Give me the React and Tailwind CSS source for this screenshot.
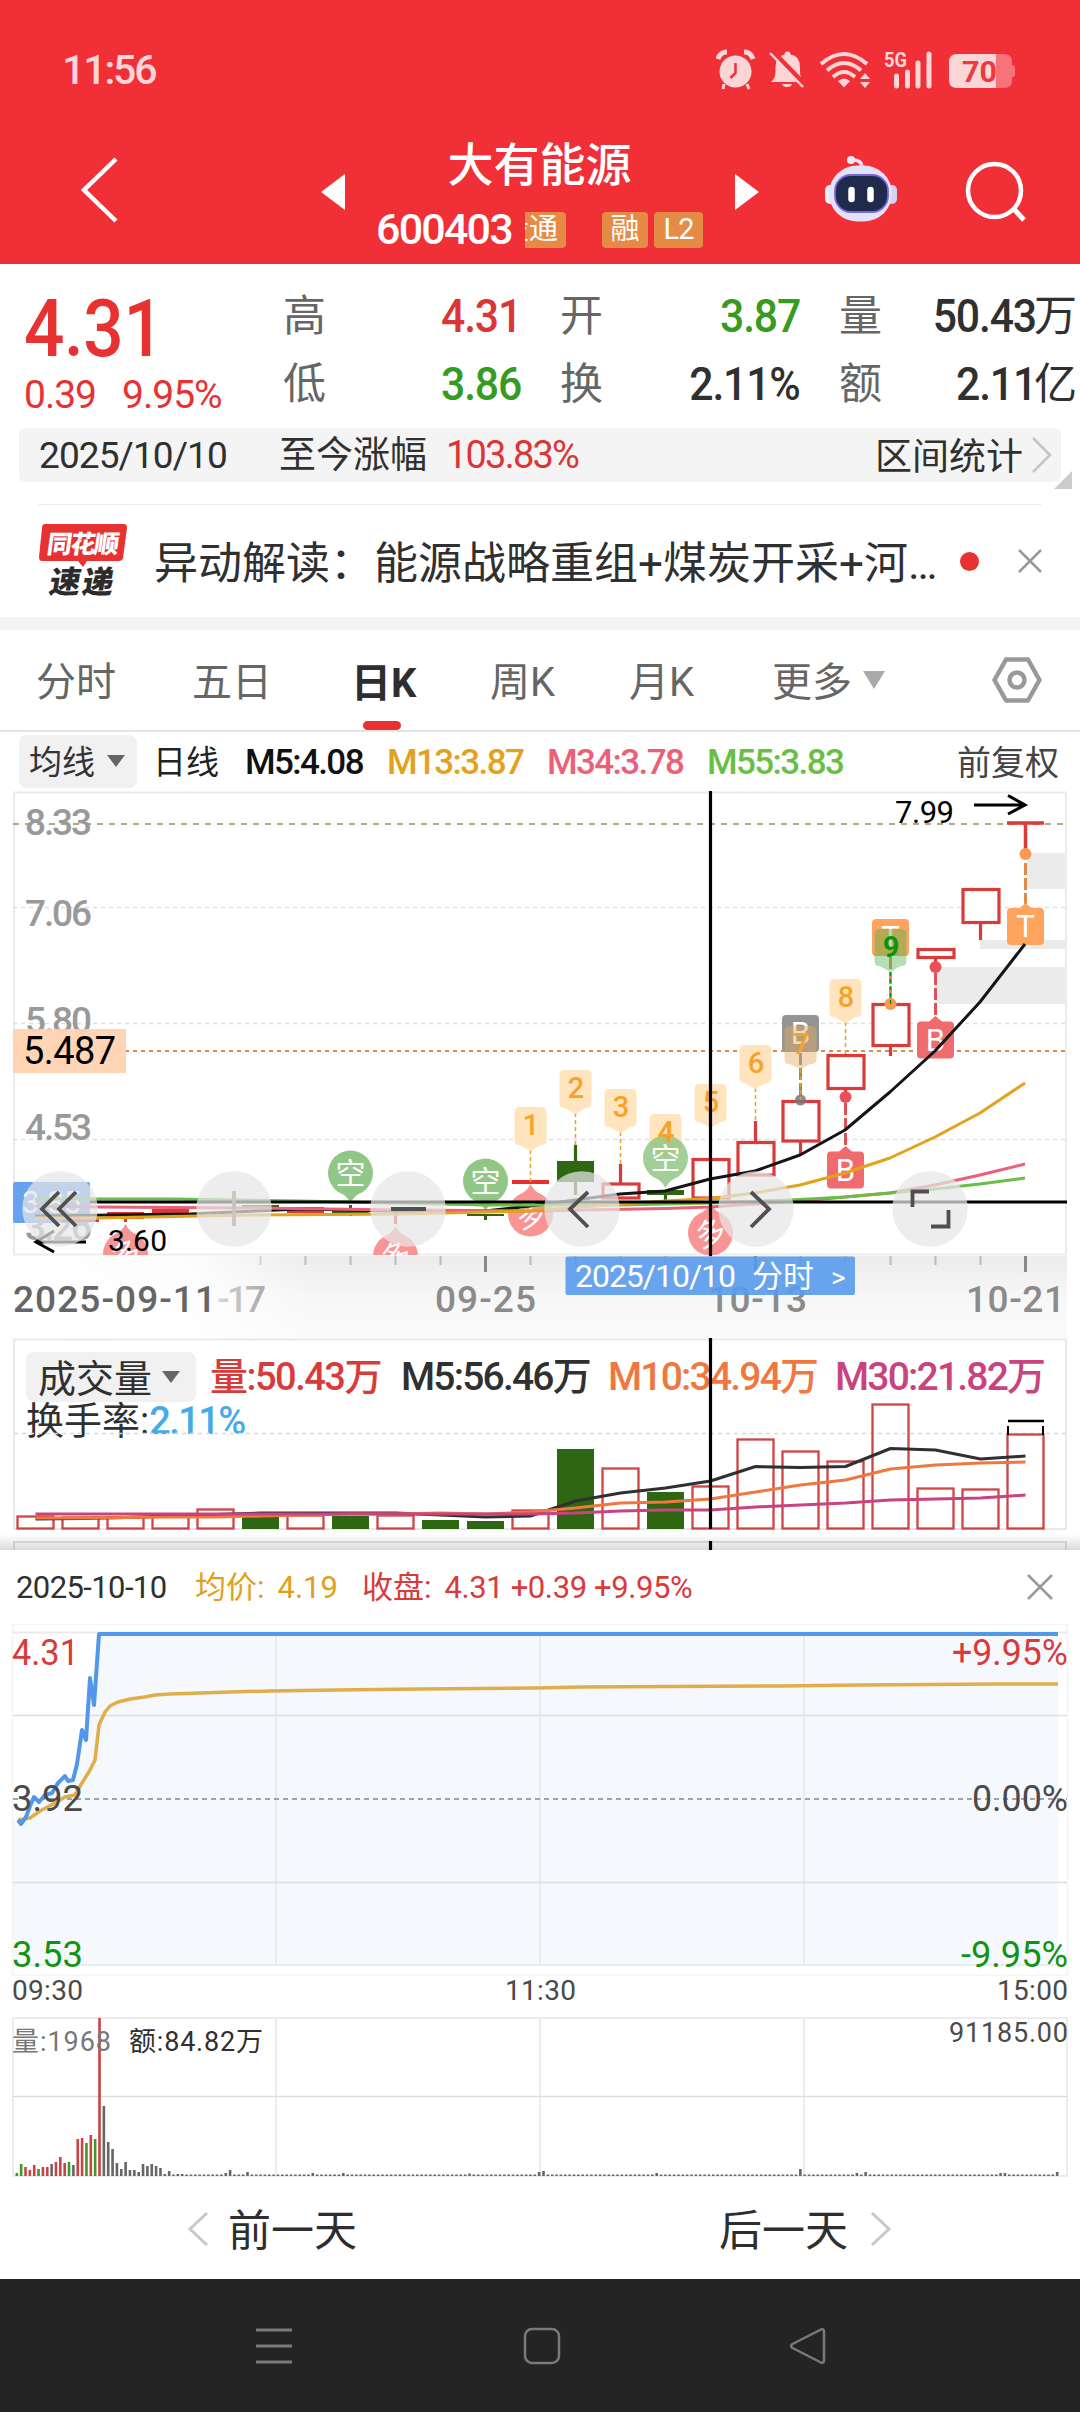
import React from 'react';

const cx = (i) => 35.5 + i * 45;
const toPoints = (list) => list.map(([x, y]) => `${x},${y}`).join(' ');

const RED = '#d93a3a';
const GREEN = '#2e6612';

const quotes = [
  { label: '高', value: '4.31', tone: 'text-[#dc3535]' },
  { label: '开', value: '3.87', tone: 'text-[#379b22]' },
  { label: '量', value: '50.43', unit: '万', tone: 'text-[#303030]' },
  { label: '低', value: '3.86', tone: 'text-[#379b22]' },
  { label: '换', value: '2.11%', tone: 'text-[#303030]' },
  { label: '额', value: '2.11', unit: '亿', tone: 'text-[#303030]' },
];

const candles = [
  { i: 12, fill: true, top: 1161, bottom: 1182, high: 1145, low: 1195 },
  { i: 13, top: 1184, bottom: 1198, high: 1164 },
  { i: 14, fill: true, top: 1190, bottom: 1195, low: 1200 },
  { i: 15, top: 1159.5, bottom: 1198 },
  { i: 16, top: 1142.5, bottom: 1175, high: 1121 },
  { i: 17, top: 1101.5, bottom: 1141, low: 1154 },
  { i: 18, top: 1055.5, bottom: 1088.5, low: 1100 },
  { i: 19, top: 1004.5, bottom: 1045.5, low: 1056 },
  { i: 20, top: 949.5, bottom: 957.5, low: 967 },
  { i: 21, top: 889.5, bottom: 922.5, low: 940 },
];

const flatCandles = [
  { i: 1, y: 1218, h: 4, color: RED },
  { i: 2, y: 1212, h: 7, color: RED },
  { i: 3, y: 1209, h: 4, color: RED },
  { i: 5, y: 1205, h: 3, color: GREEN },
  { i: 6, y: 1207, h: 6, color: RED },
  { i: 7, y: 1210, h: 4, color: GREEN },
  { i: 10, y: 1214, h: 2, color: GREEN },
  { i: 11, y: 1180, h: 4, color: '#e63030' },
];

const steps = [
  { i: 11, n: 1, y: 1107, end: 1182 },
  { i: 12, n: 2, y: 1070, end: 1145 },
  { i: 13, n: 3, y: 1089, end: 1164 },
  { i: 15, n: 5, y: 1084, end: 1127 },
  { i: 16, n: 6, y: 1045, end: 1121 },
  { i: 18, n: 8, y: 979, end: 1055 },
];

const ma5 = [[35, 1216], [190, 1214], [300, 1209], [395, 1211], [440, 1212], [485, 1211], [530, 1206], [575, 1200], [620, 1194], [665, 1191], [710, 1179], [755, 1171], [800, 1155], [845, 1130], [890, 1092], [935, 1051], [980, 1002], [1025, 944]];
const ma13 = [[35, 1218], [97, 1218], [250, 1215], [400, 1214], [530, 1211], [620, 1204], [665, 1201], [710, 1198.5], [755, 1193], [800, 1185], [845, 1173], [890, 1158], [935, 1137], [980, 1113], [1025, 1083]];
const ma34 = [[35, 1206], [97, 1207], [250, 1208], [400, 1210], [530, 1211], [665, 1208.5], [710, 1207], [755, 1204], [800, 1201], [845, 1197], [890, 1193], [935, 1185], [980, 1175], [1025, 1164]];
const ma55 = [[35, 1199], [170, 1199], [300, 1201], [485, 1205], [620, 1205], [710, 1203], [800, 1199.5], [845, 1197], [890, 1193], [935, 1189], [980, 1184], [1025, 1178]];

const volumeTops = [1517, 1518, 1518, 1517, 1510, 1516, 1516, 1516, 1516, 1520, 1521, 1511, 1449, 1469, 1492, 1487, 1440, 1452, 1462, 1405, 1489, 1490, 1435];
const volumeDown = [5, 7, 9, 10, 12, 14];
const vol5 = [1519, 1518.5, 1517.5, 1516, 1514.5, 1513, 1513, 1513, 1513, 1515, 1517, 1516, 1501, 1493, 1488, 1481, 1466.5, 1467.5, 1466.5, 1448.5, 1450, 1459, 1456];
const vol10 = [1518, 1518, 1517.5, 1517, 1517, 1516, 1515, 1514, 1514, 1513, 1514, 1512, 1508, 1503, 1502, 1499, 1492, 1485, 1480, 1469, 1465, 1463, 1462];
const vol30 = [1514, 1514, 1514, 1514, 1514, 1514, 1514, 1514, 1514, 1514, 1514, 1514, 1513, 1511, 1510, 1510, 1507, 1505, 1503, 1500, 1499, 1498, 1495];

const priceLine = [[18, 1820], [21, 1824], [26, 1817], [30, 1806], [34, 1797], [39, 1802], [45, 1795], [52, 1793], [58, 1783], [65, 1776], [68, 1781], [73, 1780], [77, 1764], [82, 1730], [86, 1740], [90, 1678], [94, 1705], [99, 1634], [1058, 1634]];
const avgLine = [[18, 1820], [30, 1818], [40, 1811], [55, 1803], [65, 1797], [75, 1795], [82, 1783], [90, 1770], [95, 1760], [99, 1725], [105, 1712], [110, 1706], [118, 1702], [130, 1699], [145, 1697], [155, 1695], [170, 1694], [230, 1692], [270, 1691], [335, 1690], [420, 1689], [535, 1688], [580, 1687], [780, 1686], [860, 1685], [1000, 1684], [1058, 1684]];

const minuteColors = 'ggrrrgrrkrrrgkrrgrgr';
const minuteHead = [3, 12, 9, 6, 11, 7, 9, 9, 12, 14, 19, 13, 14, 11, 37, 38, 33, 41, 37, 158, 70, 34, 27, 13, 7, 14, 6, 6, 4, 12, 10, 12, 10, 8, 2, 5, 1.5, 2, 2];
const minuteSpikes = { 48: 3, 49: 6, 53: 4, 68: 3, 75: 3, 104: 2.5, 120: 4, 121: 5, 147: 3, 180: 7, 193: 3, 195: 4, 226: 3, 227: 3, 239: 4 };
const minuteBars = Array.from({ length: 240 }, (_, n) => minuteHead[n] ?? minuteSpikes[n] ?? 1.5);
const minuteFill = { g: '#3c9a2c', r: '#cc4242', k: '#666666' };

function StatusIcons() {
  return (
    <svg className="h-[44px] w-[302px]" viewBox="716 48 302 44" fill="none">
      <g fill="#fcd5d7">
        <circle cx="735.5" cy="71.5" r="16" />
        <path d="M718 59q2-7 9-7M753 59q-2-7-9-7" fill="none" stroke="#fcd5d7" strokeWidth="5" />
        <path d="M724 84l-1 5M747 84l2 5" stroke="#fcd5d7" strokeWidth="3" />
        <path d="M735.500 63v10l-5 5" fill="none" stroke="#f12f37" strokeWidth="2.500" />
        <path d="M771 82h33q-4-4-4-10v-5q0-11-9.500-12.500a3 3 0 0 0-6 0q-9 2-9 12.500v5q0 6-4.500 10zM782 84h10q-1 3-5 3t-5-3z" />
      </g>
      <path d="M773.500 53l33 34" stroke="#f12f37" strokeWidth="6" />
      <path d="M770 53l33 34" stroke="#fcd5d7" strokeWidth="2.500" />
      <g stroke="#fcd5d7" strokeWidth="3.800">
        <path d="M821 64q23-20 46 0M827 70.500q17-15 34 0M833 77q11-10 22 0" />
      </g>
      <path d="M838 81q6-5 12 0l-6 6.500zM860 79l5-6 5 6zM860 82l5 6 5-6z" fill="#fcd5d7" />
      <text x="884" y="67" fontSize="21" fontWeight="700" fill="#fcd5d7" textLength="23" lengthAdjust="spacingAndGlyphs">5G</text>
      <path d="M896.500 76v10M907.500 72v14M918 63v23M929 54v32" stroke="#fcd5d7" strokeWidth="5" strokeLinecap="round" />
      <path d="M996 54h8q8 0 8 8v3q3 0 3 3v6q0 3-3 3v3q0 8-8 8h-8z" fill="#f77379" />
      <path d="M996 54h-39q-8 0-8 8v18q0 8 8 8h39z" fill="#fcd5d7" />
      <text x="962" y="82" fontSize="29" fontWeight="700" fill="#ec3a41" textLength="35" lengthAdjust="spacingAndGlyphs">70</text>
    </svg>
  );
}

function Robot() {
  return (
    <svg className="h-[68px] w-[74px] shrink-0" viewBox="824 155 74 68" fill="none">
      <path d="M851 160q11-1 11 8" stroke="#e6e1f6" strokeWidth="3.500" />
      <circle cx="851" cy="160" r="4" fill="#ece8fa" />
      <rect x="825" y="185" width="10" height="19" rx="5" fill="#efeffc" />
      <rect x="887" y="185" width="10" height="19" rx="5" fill="#d3d2f2" />
      <rect x="829" y="165.500" width="63" height="56" rx="28" fill="#e4e2f7" />
      <rect x="835" y="175" width="53" height="37" rx="16" fill="#1f2a4d" stroke="#7765dd" strokeWidth="1.800" />
      <path d="M851.500 190v9M870.500 190v9" stroke="white" strokeWidth="6.500" strokeLinecap="round" />
    </svg>
  );
}

function Header() {
  return (
    <header className="h-[264px] bg-[#f12f37] text-white">
      <div className="flex h-[120px] items-center justify-between pt-5 pr-[62px] pl-[62px]">
        <span className="text-[41px] leading-none font-medium tracking-[-2.1px] text-[#fcd5d7]">11:56</span>
        <StatusIcons />
      </div>
      <div className="flex h-[144px] items-center pl-[79px]">
        <svg className="mb-1 h-[66px] w-[40px] shrink-0" viewBox="79 157 40 66" fill="none" stroke="white" strokeWidth="4.500">
          <path d="M116 159L84 190l32 31" />
        </svg>
        <svg className="ml-[202px] h-[38px] w-[24px] shrink-0" viewBox="0 0 24 38"><path d="M24 1v36L0 19z" fill="white" /></svg>
        <div className="ml-[31px] flex w-[327px] shrink-0 flex-col items-center pt-[13px]">
          <div className="flex h-[62px] items-center text-[46px] leading-none font-medium">大有能源</div>
          <div className="flex h-[68px] w-full items-center">
            <span className="w-[149px] text-[43px] leading-none font-medium tracking-[-1.8px]">600403</span>
            <span className="flex h-[36px] w-[41px] justify-end overflow-hidden rounded-r bg-[#e58b45] pr-2 text-[29px] leading-[35px] whitespace-nowrap">股通</span>
            <span className="ml-[36px] flex h-[36px] w-[46px] items-center justify-center rounded bg-[#e58b45] text-[29px] leading-none">融</span>
            <span className="ml-[6px] flex h-[36px] w-[49px] items-center justify-center rounded bg-[#e58b45] text-[29px] leading-none tracking-[-1px]">L2</span>
          </div>
        </div>
        <svg className="ml-8 h-[38px] w-[24px] shrink-0" viewBox="0 0 24 38"><path d="M0 1v36l24-18z" fill="white" /></svg>
        <div className="ml-[65px] pb-[6px]"><Robot /></div>
        <svg className="mb-0.5 ml-[67px] h-[62px] w-[62px] shrink-0" viewBox="965 160 62 62" fill="none" stroke="white" strokeWidth="4.500">
          <circle cx="994.5" cy="190.5" r="26.500" />
          <path d="M1013 208l11 12" strokeWidth="5" />
        </svg>
      </div>
    </header>
  );
}

function Quote() {
  return (
    <section>
      <div className="flex h-[164px]">
        <div className="w-[283px] shrink-0 pl-[24px] text-[#e83131]">
          <div className="h-[101px] origin-left scale-x-[0.89] pt-[25px] text-[80px] leading-none font-medium tracking-[-0.5px]">4.31</div>
          <div className="flex gap-[26px] text-[39px] leading-[60px] tracking-[-1px]">
            <span>0.39</span>
            <span>9.95%</span>
          </div>
        </div>
        <div className="grid grid-cols-[238px_240px_238px] grid-rows-[68px_68px] gap-x-[39px] pt-[18px]">
          {quotes.map((q) => (
            <div key={q.label} className="flex items-center justify-between whitespace-nowrap">
              <span className="text-[43px] leading-none text-[#666]">{q.label}</span>
              <span className={`flex items-center text-[46px] leading-none font-medium ${q.tone}`}>
                <span className="origin-right scale-x-[0.93] tracking-[-1.3px]">{q.value}</span>
                {q.unit ? <span className="-ml-[2px] text-[43px] font-normal">{q.unit}</span> : null}
              </span>
            </div>
          ))}
        </div>
      </div>
      <div className="mx-[19px] flex h-[54px] items-center rounded-md bg-[#f4f4f4] pr-2 pl-[20px] text-[37px] leading-none text-[#303030]">
        <span className="w-[240px] tracking-[-0.9px]">2025/10/10</span>
        <span className="w-[167px]">至今涨幅</span>
        <span className="text-[38px] tracking-[-1.8px] text-[#dc3535]">103.83%</span>
        <span className="ml-auto pt-[4px]">区间统计</span>
        <svg className="ml-[8px] h-[36px] w-[22px]" viewBox="0 0 22 36" fill="none" stroke="#c4c4c4" strokeWidth="2.500"><path d="M2 1l17 17L2 35" /></svg>
      </div>
      <div className="flex h-[22px] items-start justify-end pr-[8px]">
        <svg className="-mt-[11px] h-[18px] w-[18px]" viewBox="0 0 18 18"><path d="M18 0v18H0z" fill="#ccc" /></svg>
      </div>
      <div className="mx-[38px] h-px bg-[#ededed]" />
      <div className="flex h-[112px] items-center pl-[38px]">
        <svg className="h-[80px] w-[90px] shrink-0" viewBox="38 521 90 80">
          <path d="M45 524h79q3 0 3 4l-4 30q-1 3-4 3H87l-4 6-5-6H42q-3 0-3-4l3-29q0-4 3-4z" fill="#e83131" />
          <text x="0" y="0" transform="translate(46 553) skewX(-8)" fontSize="25" fontWeight="900" fill="white" textLength="72">同花顺</text>
          <text x="0" y="0" transform="translate(48 593) skewX(-10)" fontSize="31" fontWeight="900" fill="#2c2c2c" textLength="64">速递</text>
        </svg>
        <p className="ml-[26px] w-[784px] truncate pt-[5px] text-[44px] leading-[60px] text-[#303030]">异动解读：能源战略重组+煤炭开采+河南国资</p>
        <span className="ml-[22px] h-[19px] w-[19px] shrink-0 rounded-full bg-[#e83131]" />
        <svg className="ml-[39px] h-[24px] w-[24px] shrink-0" viewBox="0 0 24 24" stroke="#999" strokeWidth="2.500"><path d="M1 1l22 22M23 1L1 23" /></svg>
      </div>
    </section>
  );
}

function Tabs() {
  return (
    <nav className="flex h-[102px] items-center border-b-2 border-[#e4e4e4] pl-[36px] text-[40px] leading-none whitespace-nowrap text-[#666]">
      <span className="w-[156px] pt-[5px]">分时</span>
      <span className="w-[159px] pt-[5px]">五日</span>
      <span className="flex h-full w-[139px] flex-col justify-between font-bold text-[#2e2e2e]">
        <span className="pt-[34px]">日K</span>
        <i className="ml-[12px] h-[9px] w-[38px] rounded-full bg-[#e83131]" />
      </span>
      <span className="w-[139px] pt-[5px]">周K</span>
      <span className="w-[143px] pt-[5px]">月K</span>
      <span className="pt-[5px]">更多</span>
      <svg className="ml-[11px] h-[18px] w-[22px]" viewBox="0 0 22 18"><path d="M0 0h22L11 18z" fill="#aaa" /></svg>
      <svg className="ml-[107px] h-[46px] w-[50px]" viewBox="0 0 50 46" fill="none" stroke="#999" strokeWidth="4.500" strokeLinejoin="round">
        <path d="M14 2.500h22L47.500 23 36 43.500H14L2.500 23z" />
        <circle cx="25" cy="23" r="7.500" />
      </svg>
    </nav>
  );
}

function AverageRow() {
  return (
    <div className="flex h-[58px] items-center pl-[19px] text-[35px] leading-[50px] font-medium tracking-[-1.6px] whitespace-nowrap">
      <span className="flex h-[53px] w-[118px] items-center rounded-lg bg-[#f1f1f1] pl-[10px] text-[33px] font-normal tracking-normal text-[#333]">
        <span className="pt-[3px]">均线</span>
        <svg className="ml-[12px] h-[12px] w-[18px]" viewBox="0 0 18 12"><path d="M0 0h18L9 12z" fill="#666" /></svg>
      </span>
      <span className="ml-[16px] w-[92px] pt-[4px] text-[33px] font-normal tracking-normal text-[#222]">日线</span>
      <span className="w-[142px] pt-[3px] text-[#111]">M5:4.08</span>
      <span className="w-[160px] pt-[3px] text-[#e3a11c]">M13:3.87</span>
      <span className="w-[160px] pt-[3px] text-[#ec6076]">M34:3.78</span>
      <span className="w-[250px] pt-[3px] text-[#69be46]">M55:3.83</span>
      <span className="pt-[4px] text-[34px] font-normal tracking-normal text-[#444]">前复权</span>
    </div>
  );
}

function StepTag({ i, n, y, end }) {
  const x = cx(i);
  return (
    <g>
      <path d={`M${x} ${y + 43}V${end}`} stroke="#dfa52e" strokeWidth="1.500" strokeDasharray="4 3" />
      <path d={`M${x - 11} ${y + 38}h-1q-4 0-4-5V${y + 5}q0-5 5-5h22q5 0 5 5v28q0 5-5 5h-1L${x} ${y + 44}z`} fill="#ffe3ba" fillOpacity="0.950" />
      <text x={x + 0.5} y={y + 28} textAnchor="middle" fontSize="29" fontWeight="500" fill="#f5a32a">{n}</text>
    </g>
  );
}

function Badge({ i, y, letter, color }) {
  return (
    <g>
      <rect x={cx(i) - 18.5} y={y} width="37" height="37" rx="4" fill={color} />
      <text x={cx(i)} y={y + 29} textAnchor="middle" fontSize="31" fill="white">{letter}</text>
    </g>
  );
}

function SignalPin({ i, y, text, up }) {
  const x = cx(i);
  const color = up ? '#f98f8f' : '#8cc580';
  const path = up
    ? `M${x - 13} ${y - 18}q9-4 13-12q4 8 13 12z`
    : `M${x - 13} ${y + 18}q9 4 13 12q4-8 13-12z`;
  return (
    <g opacity="0.950">
      <circle cx={x} cy={y} r="22.500" fill={color} />
      <path d={path} fill={color} />
      <text x={x} y={y + 11} textAnchor="middle" fontSize="30" fill="white" transform={up ? `rotate(-20 ${x} ${y})` : undefined}>{text}</text>
    </g>
  );
}

function KChart() {
  return (
    <svg className="block h-[548px] w-full" viewBox="0 790 1080 548" fill="none">
      <defs>
        <linearGradient id="axis" x1="0" y1="0" x2="0" y2="1">
          <stop offset="0" stopColor="#ececec" />
          <stop offset="0.500" stopColor="#f7f7f7" />
          <stop offset="1" stopColor="#fbfbfb" />
        </linearGradient>
        <linearGradient id="fade" x1="0" y1="0" x2="1" y2="0">
          <stop offset="0" stopColor="#fff" />
          <stop offset="0.600" stopColor="#fff" stopOpacity="0.850" />
          <stop offset="1" stopColor="#fff" stopOpacity="0" />
        </linearGradient>
        <clipPath id="plot"><rect x="13" y="790" width="1054" height="465" /></clipPath>
      </defs>

      <rect x="13" y="1256" width="1054" height="82" fill="url(#axis)" />
      {Array.from({ length: 18 }, (_, k) => k + 5).map((i) => (
        <path key={i} d={`M${cx(i)} 1256v${i === 10 || i === 16 || i === 22 ? 16 : 9}`} stroke={i === 10 || i === 16 || i === 22 ? '#888' : '#bbb'} strokeWidth={i === 10 || i === 16 || i === 22 ? 3 : 2} />
      ))}
      <g fontSize="37" fontWeight="500" fill="#8b8b8b">
        <text x="217" y="1312" textLength="49" fill="#808080">-17</text>
        <rect x="13" y="1256" width="300" height="82" fill="url(#fade)" />
        <text x="13" y="1312" fill="#666" textLength="203">2025-09-11</text>
        <text x="435" y="1312" textLength="101">09-25</text>
        <text x="708" y="1312" textLength="99">10-13</text>
        <text x="966" y="1312" textLength="99">10-21</text>
      </g>

      <rect x="14" y="792.500" width="1052" height="462" stroke="#ececec" strokeWidth="2" />
      <path d="M1027 853h40v36h-40zM980 940h87v9h-87zM935 967h132v37H935z" fill="#ebebeb" />
      <path d="M13 824h1053" stroke="#b5a878" strokeWidth="2" strokeDasharray="6 6" />
      <path d="M13 907.500h1053M13 1023.500h1053M13 1139.500h1053" stroke="#dedede" strokeWidth="1.500" strokeDasharray="4 4" />
      <g fontSize="37" fill="#999" fontWeight="500">
        <text x="25" y="835" textLength="67">8.33</text>
        <text x="25" y="926" textLength="67">7.06</text>
        <text x="25" y="1033" textLength="67">5.80</text>
        <text x="25" y="1140" textLength="67">4.53</text>
        <text x="25" y="1240" textLength="67">3.26</text>
      </g>
      <path d="M13 1051h1053" stroke="#df8a45" strokeWidth="2.200" strokeDasharray="4 4" />
      <rect x="13" y="1029" width="113" height="44" fill="#ffd3b2" fillOpacity="0.950" />
      <text x="23" y="1064" fontSize="38" fill="#000" textLength="93">5.487</text>
      <rect x="13" y="1182" width="77" height="41" rx="2" fill="#65a2ef" />
      <text x="22" y="1213" fontSize="31" fill="white" textLength="59">3.85</text>

      <g clipPath="url(#plot)">
        <SignalPin i={2} y={1254} text="多" up />
        <SignalPin i={8} y={1256} text="多" up />
        <SignalPin i={11} y={1214} text="多" up />
        <SignalPin i={15} y={1233} text="多" up />
        <SignalPin i={7} y={1173} text="空" />
        <SignalPin i={10} y={1181} text="空" />
      </g>

      {flatCandles.map((c) => (
        <rect key={c.i} x={cx(c.i) - 18.5} y={c.y} width="37" height={c.h} fill={c.color} />
      ))}
      <path d={`M${cx(7)} 1205v11M${cx(10)} 1214v6`} stroke={GREEN} strokeWidth="3" />
      <path d={`M${cx(8)} 1212v12M${cx(2)} 1216v6`} stroke={RED} strokeWidth="3" />
      {candles.map((c) => {
        const color = c.fill ? GREEN : RED;
        return (
          <g key={c.i} stroke={color} strokeWidth="3.200">
            {c.high ? <path d={`M${cx(c.i)} ${c.high}V${c.top}`} /> : null}
            {c.low ? <path d={`M${cx(c.i)} ${c.bottom}V${c.low}`} /> : null}
            {c.fill ? (
              <rect x={cx(c.i) - 18.5} y={c.top} width="37" height={c.bottom - c.top} fill={color} stroke="none" />
            ) : (
              <rect x={cx(c.i) - 17.5} y={c.top} width="36" height={c.bottom - c.top} fill="white" />
            )}
          </g>
        );
      })}
      <path d={`M1007 823h37M${cx(22)} 823v30`} stroke={RED} strokeWidth="3.500" />

      <circle cx={cx(22)} cy="854" r="6" fill="#fa9a50" />
      <circle cx={cx(20)} cy="967" r="6" fill="#e85058" />
      <circle cx={cx(19)} cy="1004" r="6" fill="#fa9a50" />
      <circle cx={cx(18)} cy="1097" r="6" fill="#e85058" />
      <circle cx={cx(17)} cy="1100" r="5.500" fill="#777" fillOpacity="0.850" />
      <g strokeWidth="3" strokeDasharray="12 3">
        <path d={`M${cx(22)} 863v42`} stroke="#e08d48" />
        <path d={`M${cx(20)} 973v46`} stroke="#e05056" />
        <path d={`M${cx(19)} 957v44`} stroke="#e08d48" />
        <path d={`M${cx(18)} 1103v46`} stroke="#e05056" />
        <path d={`M${cx(17)} 1053v42`} stroke="#888" />
      </g>
      <path d={`M${cx(22) - 7} 909l7-6 7 6z`} fill="#ffa45f" />
      <path d={`M${cx(20) - 7} 1022l7-6 7 6zM${cx(18) - 7} 1152l7-6 7 6z`} fill="#f06b6e" />
      <Badge i={22} y={908} letter="T" color="#ffa45f" />
      <Badge i={20} y={1021.5} letter="B" color="#f06b6e" />
      <Badge i={18} y={1151.5} letter="B" color="#f06b6e" />
      <Badge i={19} y={919} letter="T" color="#ffa45f" />
      <Badge i={17} y={1015} letter="B" color="#949494" />
      {steps.map((s) => <StepTag key={s.n} {...s} />)}
      <StepTag i={14} n={4} y={1114} end={1151} />
      <g opacity="0.850">
        <SignalPin i={14} y={1158} text="空" />
      </g>
      <text x={cx(14) + 0.5} y="1142" textAnchor="middle" fontSize="29" fontWeight="500" fill="#f5a32a">4</text>
      <g>
        <path d="M800.500 1069V1100" stroke="#dfa52e" strokeWidth="1.500" strokeDasharray="4 3" />
        <path d="M789.500 1064h-1q-4 0-4-5v-28q0-5 5-5h22q5 0 5 5v28q0 5-5 5h-1l-10 5z" fill="#e3ab62" fillOpacity="0.450" />
        <text x="801" y="1054" textAnchor="middle" fontSize="29" fontWeight="500" fill="#f5a32a">7</text>
        <path d="M890.500 972V1004" stroke="#0c930c" strokeWidth="1.500" strokeDasharray="4 3" />
        <path d="M879.500 966h-1q-4 0-4-5v-27q0-5 5-5h22q5 0 5 5v27q0 5-5 5h-1l-10 6z" fill="#49b34a" fillOpacity="0.420" />
        <text x="891" y="957" textAnchor="middle" fontSize="29" fontWeight="700" fill="#0c930c">9</text>
      </g>

      <g strokeWidth="3" strokeLinejoin="round">
        <polyline points={toPoints(ma5)} stroke="#151515" />
        <polyline points={toPoints(ma34)} stroke="#e8607a" />
        <polyline points={toPoints(ma55)} stroke="#69be46" />
        <polyline points={toPoints(ma13)} stroke="#e3a11c" />
      </g>

      <text x="108" y="1251" fontSize="30" fill="#000" textLength="59">3.60</text>
      <path d="M86 1242H37M54 1231l-18 11 18 10" stroke="black" strokeWidth="3" />
      <text x="895" y="823" fontSize="31" fill="#000" textLength="59">7.99</text>
      <path d="M974 805h50M1008 795.500l17 9.500-17 9" stroke="black" strokeWidth="3" />

      <path d="M90 1202h977M710.500 791v465" stroke="black" strokeWidth="3.200" />

      <g fill="#e6e6e6" fillOpacity="0.720">
        {[60, 234, 408, 582, 756, 930].map((x) => <circle key={x} cx={x} cy="1209" r="37.750" />)}
      </g>
      <g stroke="#505050" strokeWidth="3.800">
        <path d="M59 1192l-17 17 17 17M76 1192l-17 17 17 17M588 1192l-18 17 18 18M751 1192l18 17-18 18" />
        <path d="M391 1209h35" strokeWidth="4" />
        <path d="M234 1191v35" stroke="#c9c4c4" />
        <path d="M912.500 1207v-15.500H929M948.500 1210v16.500H931" />
      </g>

      <rect x="565.500" y="1256.500" width="289.500" height="38.500" rx="2" fill="#599aec" fillOpacity="0.900" />
      <g fontSize="32" fill="white">
        <text x="575" y="1287" textLength="161">2025/10/10</text>
        <text x="752" y="1287" fontSize="31">分时</text>
        <text x="831" y="1287" fontSize="28">&gt;</text>
      </g>
    </svg>
  );
}

function VolumePanel() {
  const line = (ys) => ys.map((y, i) => `${cx(i)},${y}`).join(' ');
  return (
    <section className="relative h-[212px]">
      <div className="flex h-[64px] items-end pl-[26px] text-[39px] leading-[50px] font-medium tracking-[-1.8px] whitespace-nowrap">
        <span className="flex h-[50px] w-[170px] items-center rounded-lg bg-[#f1f1f1] pl-[12px] text-[38px] font-normal tracking-normal text-[#303030]">
          <span className="pt-1">成交量</span>
          <svg className="ml-[10px] h-[12px] w-[18px]" viewBox="0 0 18 12"><path d="M0 0h18L9 12z" fill="#666" /></svg>
        </span>
        <span className="ml-[14px] w-[191px] text-[38px] tracking-[-1.5px] text-[#d93a3a]">量:50.43万</span>
        <span className="w-[207px] text-[#303030]">M5:56.46万</span>
        <span className="w-[227px] text-[#f07840]">M10:34.94万</span>
        <span className="text-[#c94380]">M30:21.82万</span>
      </div>
      <div className="pt-[2px] pl-[26px] text-[38px] leading-[34px] text-[#303030]">
        换手率:<span className="font-medium tracking-[-1.6px] text-[#45abe8]">2.11%</span>
      </div>
      <svg className="absolute inset-0 h-full w-full" viewBox="0 1338 1080 212" fill="none">
        <defs>
          <linearGradient id="shade" x1="0" y1="0" x2="0" y2="1">
            <stop offset="0" stopColor="#000" stopOpacity="0" />
            <stop offset="1" stopColor="#000" stopOpacity="0.140" />
          </linearGradient>
        </defs>
        <path d="M14 1529V1339.500h1052V1529z" stroke="#e9e9e9" strokeWidth="2" />
        <path d="M14 1433.500h1052" stroke="#d8d8d8" strokeWidth="1.500" strokeDasharray="4 4" />
        {volumeTops.map((top, i) =>
          volumeDown.includes(i) ? (
            <rect key={i} x={cx(i) - 18.5} y={top} width="37" height={1529 - top} fill={GREEN} />
          ) : (
            <rect key={i} x={cx(i) - 18} y={top - 0.5} width="36" height={1529 - top} stroke="#d04444" strokeWidth="2.300" />
          )
        )}
        <path d="M1008 1421h36" stroke="black" strokeWidth="2.500" />
        <path d="M1008 1426v9M1043 1426v9" stroke="black" strokeWidth="2" />
        <g strokeWidth="3" strokeLinejoin="round">
          <polyline points={line(vol5)} stroke="#303030" />
          <polyline points={line(vol10)} stroke="#f07840" />
          <polyline points={line(vol30)} stroke="#c94380" />
        </g>
        <path d="M14 1550v-8h1052v8" stroke="#e2e2e2" strokeWidth="2" />
        <path d="M710.500 1338v191M710.500 1541v9" stroke="black" strokeWidth="3.200" />
        <rect x="0" y="1534" width="1080" height="16" fill="url(#shade)" />
      </svg>
    </section>
  );
}

function DayDetail() {
  return (
    <section>
      <div className="flex h-[74px] items-center pl-[16px] text-[31px] leading-none whitespace-nowrap">
        <span className="w-[179px] tracking-[-0.6px] text-[#303030]">2025-10-10</span>
        <span className="flex w-[167px] gap-[13px] text-[#dfa01c]"><span>均价:</span><span>4.19</span></span>
        <span className="flex gap-[13px] text-[#d93a3a]"><span>收盘:</span><span className="tracking-[-0.4px]">4.31 +0.39 +9.95%</span></span>
        <svg className="mr-[27px] ml-auto h-[26px] w-[26px]" viewBox="0 0 26 26" stroke="#999" strokeWidth="2.500"><path d="M1 1l24 24M25 1L1 25" /></svg>
      </div>
      <svg className="block h-[554px] w-full" viewBox="0 1624 1080 554" fill="none">
        <path d="M12.500 1624.500h1055V1975H12.500z" stroke="#f4f4f4" strokeWidth="1.500" />
        <path d="M13 1632.500h1054" stroke="#ebebeb" strokeWidth="2" />
        <path d={`M${toPoints(priceLine).replace(/ /g, 'L')}V1965H13V1820z`} fill="#f5f9fe" />
        <path d="M276 1632v333M540 1632v333M804 1632v333M13 1965h1054" stroke="#e9ecef" strokeWidth="2" />
        <path d="M13 1715.500h1054M13 1882.500h1054" stroke="#dcdfe3" strokeWidth="1.500" />
        <path d="M13 1799h1054" stroke="#a0a4a8" strokeWidth="2" strokeDasharray="5 4" />
        <polyline points={toPoints(avgLine)} stroke="#e0ad48" strokeWidth="3.500" strokeLinejoin="round" />
        <polyline points={toPoints(priceLine)} stroke="#5297ea" strokeWidth="4" strokeLinejoin="round" />
        <g fontSize="36">
          <g fill="#d93a3a">
            <text x="12" y="1665" textLength="67" lengthAdjust="spacingAndGlyphs">4.31</text>
            <text x="952" y="1665" textLength="116" lengthAdjust="spacingAndGlyphs">+9.95%</text>
          </g>
          <g fill="#4a4a4a">
            <text x="12" y="1811" textLength="71" lengthAdjust="spacingAndGlyphs">3.92</text>
            <text x="972" y="1811" textLength="96" lengthAdjust="spacingAndGlyphs">0.00%</text>
          </g>
          <g fill="#129312">
            <text x="12" y="1967" textLength="71" lengthAdjust="spacingAndGlyphs">3.53</text>
            <text x="961" y="1967" textLength="107" lengthAdjust="spacingAndGlyphs">-9.95%</text>
          </g>
        </g>
        <g fontSize="28" fill="#4a4a4a">
          <text x="12" y="2000" textLength="71">09:30</text>
          <text x="505" y="2000" textLength="71">11:30</text>
          <text x="997" y="2000" textLength="71">15:00</text>
        </g>
        <path d="M13 2018h1054v158H13zM276 2018v158M540 2018v158M804 2018v158" stroke="#ececec" strokeWidth="2" />
        <path d="M13 2096.500h1054" stroke="#dedede" strokeWidth="1.500" />
        {minuteBars.map((h, n) => (
          <rect key={n} x={15.500 + n * 4.353} y={2176 - h} width="2.600" height={h} fill={minuteFill[minuteColors[n] ?? 'k']} />
        ))}
        <g fontSize="27">
          <text x="12" y="2051" fill="#777" textLength="99">量:1968</text>
          <text x="129" y="2051" fill="#303030" textLength="134">额:84.82万</text>
          <text x="949" y="2042" fill="#4a4a4a" textLength="119">91185.00</text>
        </g>
      </svg>
      <div className="flex h-[101px] items-center pl-[187px] text-[43px] leading-none text-[#2e2e2e]">
        <svg className="h-[36px] w-[22px]" viewBox="0 0 22 36" fill="none" stroke="#c8c8c8" strokeWidth="3"><path d="M20 2L3 18l17 16" /></svg>
        <span className="ml-[19px] w-[491px] pt-[5px]">前一天</span>
        <span className="pt-[5px]">后一天</span>
        <svg className="ml-[22px] h-[36px] w-[22px]" viewBox="0 0 22 36" fill="none" stroke="#c8c8c8" strokeWidth="3"><path d="M2 2l17 16L2 34" /></svg>
      </div>
    </section>
  );
}

function NavBar() {
  return (
    <footer className="flex h-[133px] items-center bg-[#242424] pl-[255px]">
      <svg className="h-[38px] w-[38px]" viewBox="0 0 38 38" stroke="#7a7a7a" strokeWidth="3"><path d="M1 3h36M1 19h36M1 35h36" /></svg>
      <svg className="ml-[230px] h-[38px] w-[38px]" viewBox="0 0 38 38" fill="none" stroke="#7a7a7a" strokeWidth="2.500"><rect x="2" y="2" width="34" height="34" rx="7" /></svg>
      <svg className="ml-[228px] h-[38px] w-[38px]" viewBox="0 0 38 38" fill="none" stroke="#7a7a7a" strokeWidth="2.500" strokeLinejoin="round"><path d="M3.500 17L32 2.500q3-1 3 2v29q0 3-3 2L3.500 21q-3-2 0-4z" /></svg>
    </footer>
  );
}

export default function App() {
  return (
    <main className="h-[2412px] w-[1080px] overflow-hidden bg-white font-['Roboto','Noto_Sans_CJK_SC',sans-serif]">
      <Header />
      <Quote />
      <div className="h-[13px] bg-[#f4f4f4]" />
      <Tabs />
      <AverageRow />
      <KChart />
      <VolumePanel />
      <DayDetail />
      <NavBar />
    </main>
  );
}
